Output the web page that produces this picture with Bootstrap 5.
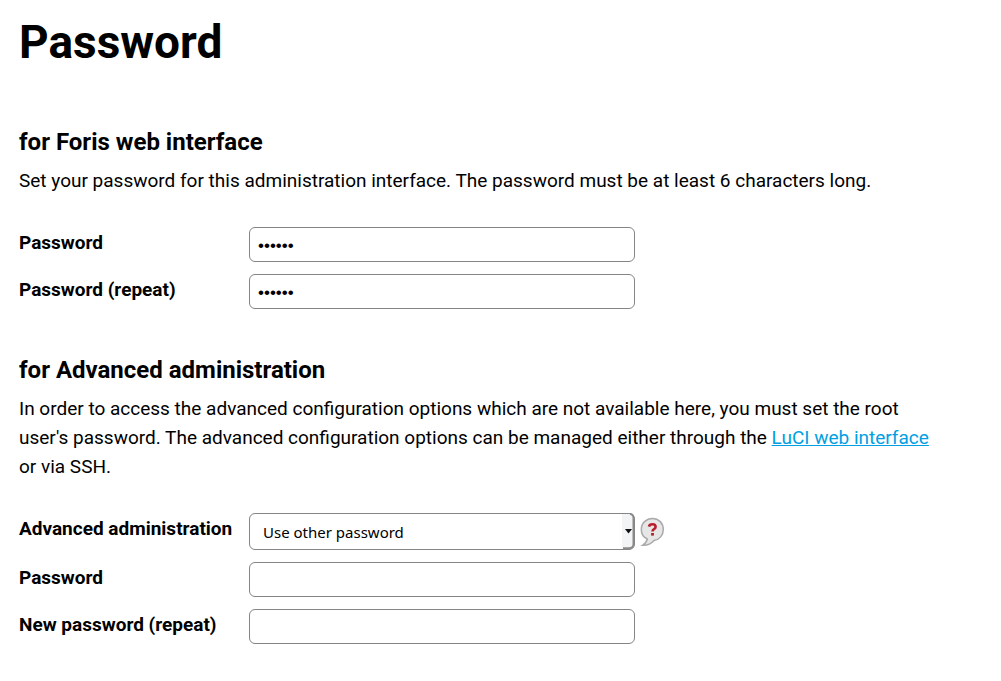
<!DOCTYPE html>
<html lang="en">
<head>
<meta charset="utf-8">
<meta name="viewport" content="width=device-width, initial-scale=1">
<title>Password</title>
<link href="https://cdn.jsdelivr.net/npm/bootstrap@5.3.0/dist/css/bootstrap.min.css" rel="stylesheet">
<style>
body{font-family:Roboto,sans-serif;font-size:19px;line-height:28px;color:#000;background:#fff}
.page{padding:12px 56px 12px 19px}
h1{font-size:46px;line-height:60px;font-weight:700;margin:0 0 56px}
h2{font-size:24px;line-height:28px;font-weight:700;margin:0 0 10px}
section{margin-bottom:47px}
.intro{line-height:29px;margin:0 0 32px}
.fields{display:grid;gap:12px}
.field-row{display:grid;grid-template-columns:230px minmax(0,386px) auto;justify-content:start;align-items:start}
.field-row label{font-weight:700;padding-top:2px}
.form-control,.form-select{border:1px solid #858585;border-radius:6px;color:#000}
.form-control{height:35px;padding:2px 8px 0;font:17px "Liberation Sans",sans-serif}
.form-select{height:37px;padding:0 13px;font:15px "Noto Sans",sans-serif;background-image:none}
.arrow{top:0;right:0;pointer-events:none}
a{color:#009fe3}
.help{border:0;background:none;padding:0;margin:4px 0 0 5px;line-height:0}
@media (max-width:600px){.field-row{grid-template-columns:minmax(0,1fr) auto}.field-row label{grid-column:1/-1}}
</style>
</head>
<body>
<main class="page container-fluid">
<h1>Password</h1>
<form>
<section>
<h2>for Foris web interface</h2>
<p class="intro">Set your password for this administration interface. The password must be at least 6 characters long.</p>
<div class="fields">
<div class="field-row"><label for="p1">Password</label><input class="form-control" type="password" id="p1" value="secret"></div>
<div class="field-row"><label for="p2">Password (repeat)</label><input class="form-control" type="password" id="p2" value="secret"></div>
</div>
</section>
<section>
<h2>for Advanced administration</h2>
<p class="intro">In order to access the advanced configuration options which are not available here, you must set the root user's password. The advanced configuration options can be managed either through the <a href="#">LuCI web interface</a> or via SSH.</p>
<div class="fields">
<div class="field-row"><label for="mode">Advanced administration</label>
<div class="position-relative"><select class="form-select" id="mode"><option>Use other password</option></select>
<svg class="arrow position-absolute" width="13" height="37" viewBox="0 0 13 37" aria-hidden="true"><path d="M0 1H7Q12 1 12 6V31Q12 36 7 36H0Z" fill="#f3f4f5"/><path d="M1 35.3H7Q11.5 35.3 11.5 31V5Q11.5 1.5 8 .8" fill="none" stroke="#8a8a8a" stroke-width="2"/><path d="M3 16H10L6.500 20.500Z" fill="#111"/></svg></div>
<button class="help" type="button" aria-label="Help"><svg width="25" height="30" viewBox="0 0 25 30" aria-hidden="true"><path d="M12.500 1.500C6.300 1.500 1.300 6.200 1.300 12.500C1.300 17 3.800 20.500 7.300 22C6.800 24.500 5 26.800 2.500 28.300C7.500 28.600 11.500 26.500 14 23.500C19.500 22.700 23.300 18.300 23.300 12.500C23.300 6.200 18.700 1.500 12.500 1.500Z" fill="#e6e6e6" stroke="#aaa" stroke-width="1.500"/><path d="M9 9.600Q9.500 7.300 12.500 7.300Q15.600 7.300 15.600 9.800Q15.600 11.200 14 12.200Q12.500 13 12.500 14.500" fill="none" stroke="#b81d2c" stroke-width="2.600"/><rect x="11.100" y="16" width="2.800" height="2.600" fill="#b81d2c"/></svg></button></div>
<div class="field-row"><label for="p3">Password</label><input class="form-control" type="password" id="p3"></div>
<div class="field-row"><label for="p4">New password (repeat)</label><input class="form-control" type="password" id="p4"></div>
</div>
</section>
</form>
</main>
<script src="https://cdn.jsdelivr.net/npm/bootstrap@5.3.0/dist/js/bootstrap.bundle.min.js"></script>
</body>
</html>
